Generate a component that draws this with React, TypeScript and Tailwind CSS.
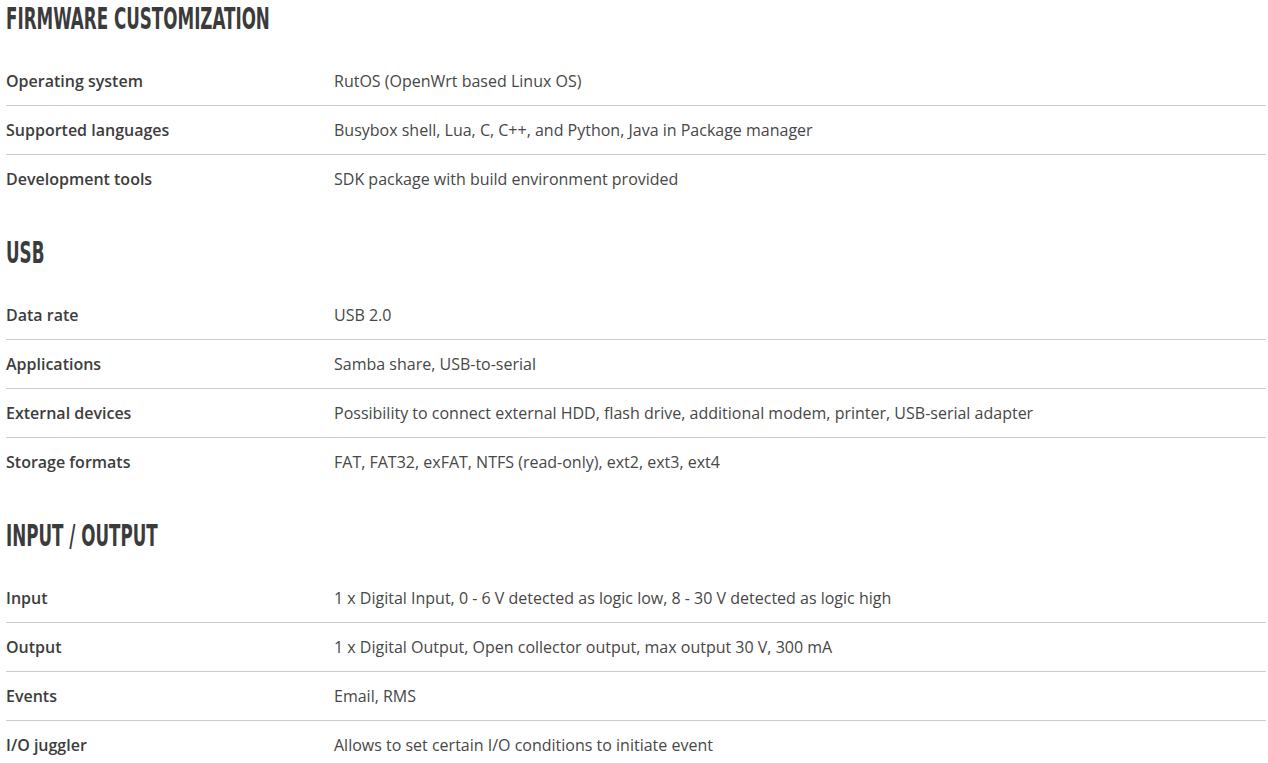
import React from 'react';

type Row = { label: string; value: string };
type Section = { title: string; rows: Row[] };

const sections: Section[] = [
    {
        title: 'FIRMWARE CUSTOMIZATION',
        rows: [
            { label: 'Operating system', value: 'RutOS (OpenWrt based Linux OS)' },
            { label: 'Supported languages', value: 'Busybox shell, Lua, C, C++, and Python, Java in Package manager' },
            { label: 'Development tools', value: 'SDK package with build environment provided' },
        ],
    },
    {
        title: 'USB',
        rows: [
            { label: 'Data rate', value: 'USB 2.0' },
            { label: 'Applications', value: 'Samba share, USB-to-serial' },
            { label: 'External devices', value: 'Possibility to connect external HDD, flash drive, additional modem, printer, USB-serial adapter' },
            { label: 'Storage formats', value: 'FAT, FAT32, exFAT, NTFS (read-only), ext2, ext3, ext4' },
        ],
    },
    {
        title: 'INPUT / OUTPUT',
        rows: [
            { label: 'Input', value: '1 x Digital Input, 0 - 6 V detected as logic low, 8 - 30 V detected as logic high' },
            { label: 'Output', value: '1 x Digital Output, Open collector output, max output 30 V, 300 mA' },
            { label: 'Events', value: 'Email, RMS' },
            { label: 'I/O juggler', value: 'Allows to set certain I/O conditions to initiate event' },
        ],
    },
];

const SpecSection: React.FC<{ section: Section }> = ({ section }) => (
    <section className="mb-[31px]">
        <h2 className="h-9 flex items-center overflow-visible pt-[2px]">
            <span className="inline-block origin-left scale-x-[0.62] whitespace-nowrap text-[30px] font-bold leading-none text-[#3b3b3b] [font-family:'Liberation_Sans_Narrow','DejaVu_Sans_Condensed',sans-serif]">
                {section.title}
            </span>
        </h2>
        <div className="mt-[21px]">
            {section.rows.map((row, i) => {
                const last = i === section.rows.length - 1;
                return (
                    <div
                        key={row.label}
                        className={`flex items-center ${last ? 'h-12' : 'h-[49px] border-b border-[#cccccc]'}`}
                    >
                        <div className="w-[328px] shrink-0 text-[16px] font-semibold text-[#3d3d3d]">{row.label}</div>
                        <div className="text-[16px] text-[#474747]">{row.value}</div>
                    </div>
                );
            })}
        </div>
    </section>
);

export default function App() {
    return (
        <div className="min-h-screen bg-white [font-family:'Open_Sans',sans-serif]">
            <div className="w-[1260px] ml-[6px]">
                {sections.map(s => (
                    <SpecSection key={s.title} section={s} />
                ))}
            </div>
        </div>
    );
}
